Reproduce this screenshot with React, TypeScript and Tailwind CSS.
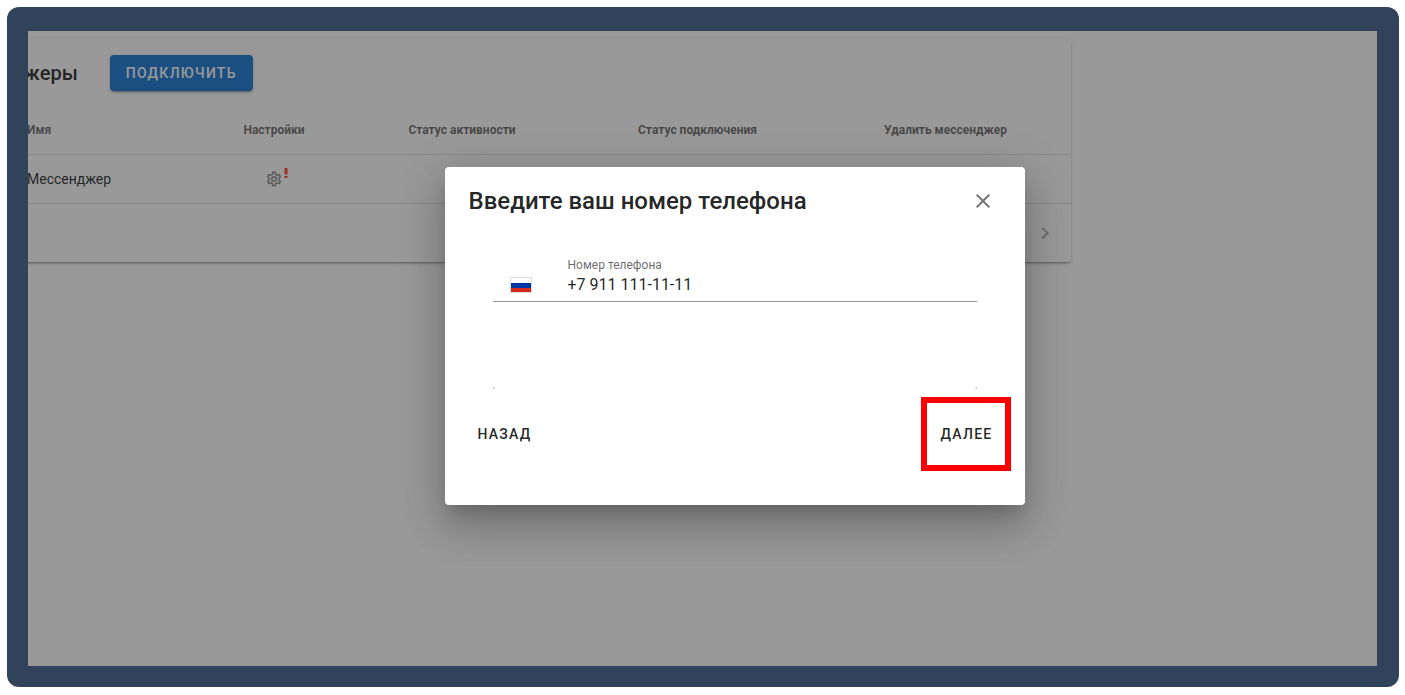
interface Messenger {
    id: number;
    name: string;
}

const messengers: Messenger[] = [{ id: 1, name: "Мессенджер" }];

function CogIcon() {
    return (
        <svg viewBox="0 0 24 24" className="size-[18px] fill-current" aria-hidden="true">
            <path d="M12,8A4,4 0 0,1 16,12A4,4 0 0,1 12,16A4,4 0 0,1 8,12A4,4 0 0,1 12,8M12,10A2,2 0 0,0 10,12A2,2 0 0,0 12,14A2,2 0 0,0 14,12A2,2 0 0,0 12,10M10,22C9.75,22 9.54,21.82 9.5,21.58L9.13,18.93C8.5,18.68 7.96,18.34 7.44,17.94L4.95,18.95C4.73,19.03 4.46,18.95 4.34,18.73L2.34,15.27C2.21,15.05 2.27,14.78 2.46,14.63L4.57,12.97L4.5,12L4.57,11L2.46,9.37C2.27,9.22 2.21,8.95 2.34,8.73L4.34,5.27C4.46,5.05 4.73,4.96 4.95,5.05L7.44,6.05C7.96,5.66 8.5,5.32 9.13,5.07L9.5,2.42C9.54,2.18 9.75,2 10,2H14C14.25,2 14.46,2.18 14.5,2.42L14.87,5.07C15.5,5.32 16.04,5.66 16.56,6.05L19.05,5.05C19.27,4.96 19.54,5.05 19.66,5.27L21.66,8.73C21.79,8.95 21.73,9.22 21.54,9.37L19.43,11L19.5,12L19.43,13L21.54,14.63C21.73,14.78 21.79,15.05 21.66,15.27L19.66,18.73C19.54,18.95 19.27,19.04 19.05,18.95L16.56,17.95C16.04,18.34 15.5,18.68 14.87,18.93L14.5,21.58C14.46,21.82 14.25,22 14,22H10M11.25,4L10.88,6.61C9.68,6.86 8.62,7.5 7.85,8.39L5.44,7.35L4.69,8.65L6.8,10.2C6.4,11.37 6.4,12.64 6.8,13.8L4.68,15.36L5.43,16.66L7.86,15.62C8.63,16.5 9.68,17.14 10.87,17.38L11.24,20H12.76L13.13,17.39C14.32,17.14 15.37,16.5 16.14,15.62L18.57,16.66L19.32,15.36L17.2,13.81C17.6,12.64 17.6,11.37 17.2,10.2L19.31,8.65L18.56,7.35L16.15,8.39C15.38,7.5 14.32,6.86 13.12,6.62L12.75,4H11.25Z" />
        </svg>
    );
}

function AlertIcon() {
    return (
        <svg viewBox="0 0 4 12" className="h-3 w-1 fill-[#ff3b30]" aria-hidden="true">
            <path d="M0.5 1h3v6.500h-3zM0.5 9h3v2h-3z" />
        </svg>
    );
}

function CloseIcon() {
    return (
        <svg viewBox="0 0 24 24" className="size-6 fill-current" aria-hidden="true">
            <path d="M19,6.41L17.59,5L12,10.59L6.41,5L5,6.41L10.59,12L5,17.59L6.41,19L12,13.41L17.59,19L19,17.59L13.41,12L19,6.41Z" />
        </svg>
    );
}

function ChevronRightIcon() {
    return (
        <svg viewBox="0 0 24 24" className="size-6 fill-current" aria-hidden="true">
            <path d="M8.59,16.58L13.17,12L8.59,7.41L10,6L16,12L10,18L8.59,16.58Z" />
        </svg>
    );
}

function RussiaFlag() {
    return (
        <svg viewBox="0 0 22 16" className="h-4 w-[22px]" aria-hidden="true">
            <rect x="0" y="0" width="22" height="16" rx="1" fill="#dcdcdc" />
            <path d="M1 1h20v5H1z" fill="#fff" />
            <path d="M1 6h20v5H1z" fill="#0039a6" />
            <path d="M1 11h20v4H1z" fill="#d52b1e" />
        </svg>
    );
}

function MessengersCard() {
    return (
        <section className="mr-[306px] -ml-[104px] rounded bg-white shadow-[0_3px_1px_-2px_rgba(0,0,0,0.2),0_2px_2px_0_rgba(0,0,0,0.14),0_1px_5px_0_rgba(0,0,0,0.12)]">
            <div className="flex items-center gap-8 p-4">
                <h1 className="text-xl font-medium">Мессенджеры</h1>
                <button
                    type="button"
                    className="h-9 rounded bg-[#1976d2] px-4 text-sm font-medium tracking-[0.09em] text-white uppercase shadow-[0_3px_1px_-2px_rgba(0,0,0,0.2),0_2px_2px_0_rgba(0,0,0,0.14),0_1px_5px_0_rgba(0,0,0,0.12)]"
                >
                    Подключить
                </button>
            </div>
            <table className="w-full table-fixed text-sm">
                <colgroup>
                    <col className="w-[87px]" />
                    <col className="w-[188px]" />
                    <col className="w-[150px]" />
                    <col className="w-[226px]" />
                    <col className="w-[245px]" />
                    <col />
                </colgroup>
                <thead>
                    <tr className="h-[47px] border-b border-black/12 text-xs text-black/60">
                        <td />
                        <th className="px-4 text-left font-bold">Имя</th>
                        <th className="px-4 font-bold">Настройки</th>
                        <th className="px-4 font-bold">Статус активности</th>
                        <th className="px-4 font-bold">Статус подключения</th>
                        <th className="px-4 font-bold">Удалить мессенджер</th>
                    </tr>
                </thead>
                <tbody>
                    {messengers.map((item) => (
                        <tr key={item.id} className="h-[49px] border-b border-black/12">
                            <td />
                            <td className="px-4">{item.name}</td>
                            <td className="px-4">
                                <button type="button" aria-label="Настройки" className="relative mx-auto block text-black/45">
                                    <CogIcon />
                                    <span className="absolute -top-[3px] -right-[5px]">
                                        <AlertIcon />
                                    </span>
                                </button>
                            </td>
                            <td />
                            <td />
                            <td />
                        </tr>
                    ))}
                </tbody>
            </table>
            <div className="flex h-[58px] items-center justify-end px-3.5">
                <button type="button" disabled aria-label="Следующая страница" className="text-black/30">
                    <ChevronRightIcon />
                </button>
            </div>
        </section>
    );
}

function PhoneDialog() {
    return (
        <div
            role="dialog"
            aria-labelledby="phone-title"
            className="w-full max-w-[580px] rounded bg-white pb-[34px] shadow-[0_11px_15px_-7px_rgba(0,0,0,0.2),0_24px_38px_3px_rgba(0,0,0,0.14),0_9px_46px_8px_rgba(0,0,0,0.12)]"
        >
            <div className="flex h-[68px] items-center justify-between pr-[30px] pl-6">
                <h2 id="phone-title" className="text-2xl font-medium">
                    Введите ваш номер телефона
                </h2>
                <button type="button" aria-label="Закрыть" className="text-black/54">
                    <CloseIcon />
                </button>
            </div>

            <div className="px-12 pt-[19px]">
                <div className="flex h-12 items-end border-b border-black/42 pl-[17px]">
                    <div className="w-[58px] pb-2">
                        <RussiaFlag />
                    </div>
                    <div className="flex flex-1 flex-col pb-1">
                        <label htmlFor="phone" className="text-xs text-black/60">
                            Номер телефона
                        </label>
                        <input id="phone" type="tel" defaultValue="+7 911 111-11-11" className="h-6 w-full text-base outline-none" />
                    </div>
                </div>
                <div className="flex h-[87px] items-end justify-between">
                    <span className="size-0.5 border-b border-l border-black/20" />
                    <span className="size-0.5 border-r border-b border-black/20" />
                </div>
            </div>

            <div className="mt-2 flex items-center justify-between pr-3.5 pl-4">
                <button type="button" className="h-9 px-[17px] text-sm font-medium tracking-[0.09em] uppercase">
                    Назад
                </button>
                <div className="flex h-[74px] w-[90px] items-center justify-end border-6 border-[#ff0000] pr-3">
                    <button type="button" className="h-9 text-sm font-medium tracking-[0.09em] uppercase">
                        Далее
                    </button>
                </div>
            </div>
        </div>
    );
}

export default function App() {
    return (
        <div className="flex h-screen bg-white pt-[7px] pr-1.5 pb-2 pl-[7px] font-['Roboto',sans-serif] text-black/87">
            <div className="flex flex-1 rounded-xl bg-[#31425b] pt-6 pr-[22px] pb-[21px] pl-[21px]">
                <main className="relative flex-1 overflow-hidden bg-white pt-2">
                    <MessengersCard />
                    <div className="absolute inset-0 flex items-center justify-center bg-[#212121]/46 pb-[25px] pl-16">
                        <PhoneDialog />
                    </div>
                </main>
            </div>
        </div>
    );
}
